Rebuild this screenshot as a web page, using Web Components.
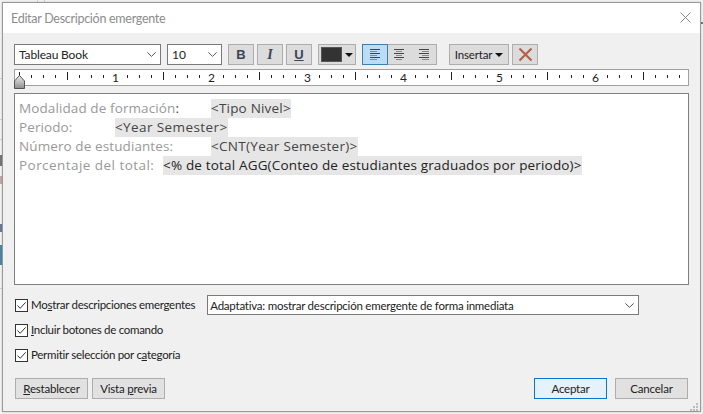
<!DOCTYPE html>
<html><head><meta charset="utf-8">
<style>
html,body{margin:0;padding:0;width:703px;height:414px;overflow:hidden;background:#f3f3f3}
body{font-family:Lato,"Open Sans",sans-serif;color:#222}
#desk{position:absolute;inset:0;overflow:hidden}
#desk i{position:absolute;background:#d4d4d4}
edit-dialog{margin:2px 0 0 2px}
</style></head><body>
<div id="desk"><i style="left:37px;top:0;width:1px;height:2px"></i><i style="left:44px;top:0;width:1px;height:2px"></i><i style="left:0;top:78px;width:2px;height:1px"></i><i style="left:0;top:119px;width:2px;height:1px"></i><i style="left:0;top:139px;width:2px;height:1px"></i><i style="left:0;top:155px;width:2px;height:11px;background:#777"></i><i style="left:0;top:176px;width:2px;height:8px;background:#c9a9a9"></i><i style="left:0;top:224px;width:2px;height:8px;background:#6d7a9c"></i><i style="left:0;top:245px;width:2px;height:20px;background:#4a8aa6"></i><i style="left:0;top:288px;width:2px;height:1px"></i><i style="left:701px;top:22px;width:2px;height:2px;background:#777"></i></div>
<edit-dialog></edit-dialog>
<template id="t-btn"><style>
:host{display:inline-flex;align-items:center;justify-content:center;box-sizing:border-box;height:21px;background:#e1e1e1;border:1px solid #adadad;font:11.5px/1 Lato,"Open Sans",sans-serif;letter-spacing:-.2px;color:#222;white-space:nowrap}
:host([primary]){background:#e5f1fb;border-color:#0078d7}
::slotted(u){text-underline-offset:1px}
</style><span><slot></slot></span></template>
<template id="t-check"><style>
:host{display:flex;align-items:center;gap:3px;font:11.5px/16px Lato,"Open Sans",sans-serif;letter-spacing:-.29px;color:#222;white-space:nowrap}
svg{flex:none;display:block}
</style><svg width="13" height="13" viewBox="0 0 13 13"><rect x=".5" y=".5" width="12" height="12" fill="#fff" stroke="#333"/><path d="M2.5 6.5 5.2 9.3 10.6 3.4" fill="none" stroke="#333"/></svg><span><slot></slot></span></template>
<template id="t-select"><style>
:host{display:flex;align-items:center;justify-content:space-between;box-sizing:border-box;background:#fff;border:1px solid #7a7a7a;color:#222;white-space:nowrap}
svg{flex:none;display:block}
</style><span><slot></slot></span><svg width="9" height="5" viewBox="0 0 9 5"><path d="M.4.4 4.5 4.4 8.6.4" fill="none" stroke="#555"/></svg></template>
<template id="t-ruler"><style>
:host{display:block;position:relative;box-sizing:border-box;height:17px;background:#fff;border:1px solid #a0a0a0}
span{position:absolute;top:0;font:12px/15px Lato,"Open Sans",sans-serif;color:#222;transform:translateX(-50%)}
i{position:absolute;background:#222}
svg{position:absolute;left:-1px;top:5px}
</style><div id="m"></div><svg width="12" height="14" viewBox="0 0 12 14"><defs><linearGradient id="g" x1="0" y1="0" x2="0" y2="1"><stop offset="0" stop-color="#eee"/><stop offset="1" stop-color="#8e8e8e"/></linearGradient></defs><path d="M5.5.5 10.5 6V13.5H.5V6Z" fill="url(#g)" stroke="#555"/></svg></template>
<script>
function tpl(id){return document.getElementById(id).content.cloneNode(true)}
class Base extends HTMLElement{constructor(id){super();this.attachShadow({mode:"open"}).appendChild(tpl(id))}}
customElements.define("ui-btn",class extends Base{constructor(){super("t-btn")}});
customElements.define("ui-check",class extends Base{constructor(){super("t-check")}});
customElements.define("ui-select",class extends Base{constructor(){super("t-select")}});
customElements.define("ui-ruler",class extends Base{constructor(){super("t-ruler");
 const m=this.shadowRoot.getElementById("m");let h="";
 const start=4,step=96;
 for(let n=0;n<7;n++){const x=start+n*step;
  for(let k=0;k<8;k++){const px=x+k*12;if(px>666)break;
   if(k==0&&n>0)continue;
   if(k==4){h+=`<i style="left:${px}px;top:2px;width:1px;height:8px"></i>`}
   else if(k==0){h+=`<i style="left:${px}px;top:2px;width:1px;height:4px"></i>`}
   else h+=`<i style="left:${px}px;top:5px;width:1px;height:3px"></i>`;}
  if(n>0)h+=`<span style="left:${x+.5}px">${n}</span>`;}
 m.innerHTML=h;}});
customElements.define("edit-dialog",class extends HTMLElement{constructor(){super();
 const ic=(w)=>`<svg width="14" height="11" viewBox="0 0 14 11">${w}</svg>`;
 const lines=(a)=>a.map((l,i)=>`<path d="M${l[0]} ${i*2+.5}H${l[1]}" stroke="${i%2?'#888':'#444'}"/>`).join("");
 this.attachShadow({mode:"open"}).innerHTML=`<style>
:host{display:flex;flex-direction:column;position:relative;width:699px;height:410px;box-sizing:border-box;background:#f0f0f0;border:1px solid #9a9a9a;box-shadow:0 0 2px rgba(0,0,0,.2)}
.title{flex:none;height:30px;background:#fff;display:flex;align-items:center;justify-content:space-between;padding:0 9px 0 8px;font:12.5px Lato,"Open Sans",sans-serif;letter-spacing:-.28px;color:#8c8c8c}
.title svg{margin-top:-2px}
.body{flex:1;display:flex;flex-direction:column;padding:11px 11px 0 11px;min-height:0}
.bar{display:flex;align-items:center;height:21px;margin-bottom:4px}
.font{width:147px;height:21px;padding:0 4px;font:12px Lato,"Open Sans",sans-serif;letter-spacing:-.15px;margin-right:6px}
.size{width:55px;height:21px;padding:0 4px;font:12px Lato,"Open Sans",sans-serif;margin-right:6px}
.sq{width:26px;height:21px;background:#dcdcdc;border:1px solid #adadad;box-sizing:border-box;display:flex;align-items:center;justify-content:center;margin-right:3px;color:#3a4655}
.b,.i,.u{font:bold 13px/1 "Liberation Serif",serif}
.b{font-family:"Liberation Sans",sans-serif}.i{font-style:italic;font-size:14px}.u{text-decoration:underline;font-family:"Liberation Sans",sans-serif}
.col{width:38px;height:21px;background:#dcdcdc;border:1px solid #adadad;box-sizing:border-box;display:flex;align-items:center;padding-left:2px;gap:3px;margin-right:6px;margin-left:3px}
.col b{display:block;width:21px;height:15px;background:#333;border:1px solid #555;box-sizing:border-box}
.tri{width:0;height:0;border:4px solid transparent;border-top:4px solid #111;border-bottom:0}
.align{display:flex;width:75px;height:21px;background:#dcdcdc;border:1px solid #adadad;box-sizing:border-box;margin-right:12px}
.align div{flex:1;display:flex;align-items:center;justify-content:center}
.align .on{background:#bcdcf4;box-shadow:0 0 0 1px #3b7fb0}
.ins{width:60px;height:21px;background:#dcdcdc;border:1px solid #adadad;box-sizing:border-box;display:flex;align-items:center;justify-content:center;gap:3px;font:11.5px Lato,"Open Sans",sans-serif;letter-spacing:-.15px;color:#222;margin-right:3px}
.x{width:26px;height:21px;background:#dcdcdc;border:1px solid #adadad;box-sizing:border-box;display:flex;align-items:center;justify-content:center}
.edit{flex:none;margin-top:7px;height:192px;box-sizing:border-box;background:#fff;border:1px solid #7f7f7f;padding:5px 4px 0;font:13.5px/19px "Open Sans",sans-serif;letter-spacing:.1px;color:#999;white-space:pre}
.edit mark{background:#e6e6e6;color:#444}
.edit .row{display:flex;height:19px}
.edit em{font-style:normal}
.opts{display:flex;flex-direction:column;gap:5px;margin-top:10px;padding-left:1px}
.opts .r{display:flex;align-items:center;height:20px}
.sel{margin-left:12px;width:432px;height:20px;padding:0 4px 0 2px;font:11.5px Lato,"Open Sans",sans-serif;letter-spacing:-.23px}
.foot{display:flex;align-items:center;margin-top:auto;margin-bottom:12px;padding:0 1px}
.foot ui-btn{width:73px}
.foot .a{margin-right:4px}
.foot .sp{flex:1}
.foot .o{margin-right:8px}
u{text-underline-offset:1px}
.grip{position:absolute;right:2px;bottom:0}
</style>
<div class="title"><span>Editar Descripción emergente</span><svg width="11" height="11" viewBox="0 0 11 11"><path d="M.5.5 10.5 10.5M10.5.5 .5 10.5" stroke="#8a8a8a" fill="none"/></svg></div>
<div class="body">
 <div class="bar">
  <ui-select class="font">Tableau Book</ui-select>
  <ui-select class="size">10</ui-select>
  <div class="sq"><span class="b">B</span></div><div class="sq"><span class="i">I</span></div><div class="sq"><span class="u">U</span></div>
  <div class="col"><b></b><span class="tri"></span></div>
  <div class="align">
   <div class="on">${ic(lines([[2,12],[2,9],[2,12],[2,9],[2,12],[2,9]]))}</div>
   <div>${ic(lines([[2,12],[4,10],[2,12],[4,10],[2,12],[4,10]]))}</div>
   <div>${ic(lines([[2,12],[5,12],[2,12],[5,12],[2,12],[5,12]]))}</div>
  </div>
  <div class="ins">Insertar<span class="tri"></span></div>
  <div class="x"><svg width="15" height="15" viewBox="0 0 15 15"><path d="M1.5 1.5 13.5 13.5M13.5 1.5 1.5 13.5" stroke="#b5614a" stroke-width="2.2" fill="none"/></svg></div>
 </div>
 <ui-ruler></ui-ruler>
 <div class="edit"><div class="row"><span style="width:192px">Modalidad de formación<em style="color:#444">:</em></span><mark style="letter-spacing:.2px">&lt;Tipo Nivel&gt;</mark></div><div class="row"><span style="width:96px">Periodo:</span><mark style="letter-spacing:.4px">&lt;Year Semester&gt;</mark></div><div class="row"><span style="width:192px">Número de estudiantes:</span><mark style="letter-spacing:.3px">&lt;CNT(Year Semester)&gt;</mark></div><div class="row"><span style="width:144px;letter-spacing:.45px">Porcentaje del total:</span><mark style="color:#222;letter-spacing:.17px">&lt;% de total AGG(Conteo de estudiantes graduados por periodo)&gt;</mark></div></div>
 <div class="opts">
  <div class="r"><ui-check>Mo<u>s</u>trar descripciones emergentes</ui-check><ui-select class="sel">Adaptativa: mostrar descripción emergente de forma inmediata</ui-select></div>
  <div class="r"><ui-check><u>I</u>ncluir botones de comando</ui-check></div>
  <div class="r"><ui-check>Permitir selección por c<u>a</u>tegoría</ui-check></div>
 </div>
 <div class="foot"><ui-btn class="a"><u>R</u>establecer</ui-btn><ui-btn class="c">Vista <u>p</u>revia</ui-btn><span class="sp"></span><ui-btn class="o" primary>Aceptar</ui-btn><ui-btn class="k">Cancelar</ui-btn></div>
</div>
<svg class="grip" width="8" height="8" viewBox="0 0 8 8" fill="#bdbdbd"><rect x="6" y="0" width="2" height="2"/><rect x="3" y="3" width="2" height="2"/><rect x="6" y="3" width="2" height="2"/><rect x="0" y="6" width="2" height="2"/><rect x="3" y="6" width="2" height="2"/><rect x="6" y="6" width="2" height="2"/></svg>`;}});
</script>
</body></html>
